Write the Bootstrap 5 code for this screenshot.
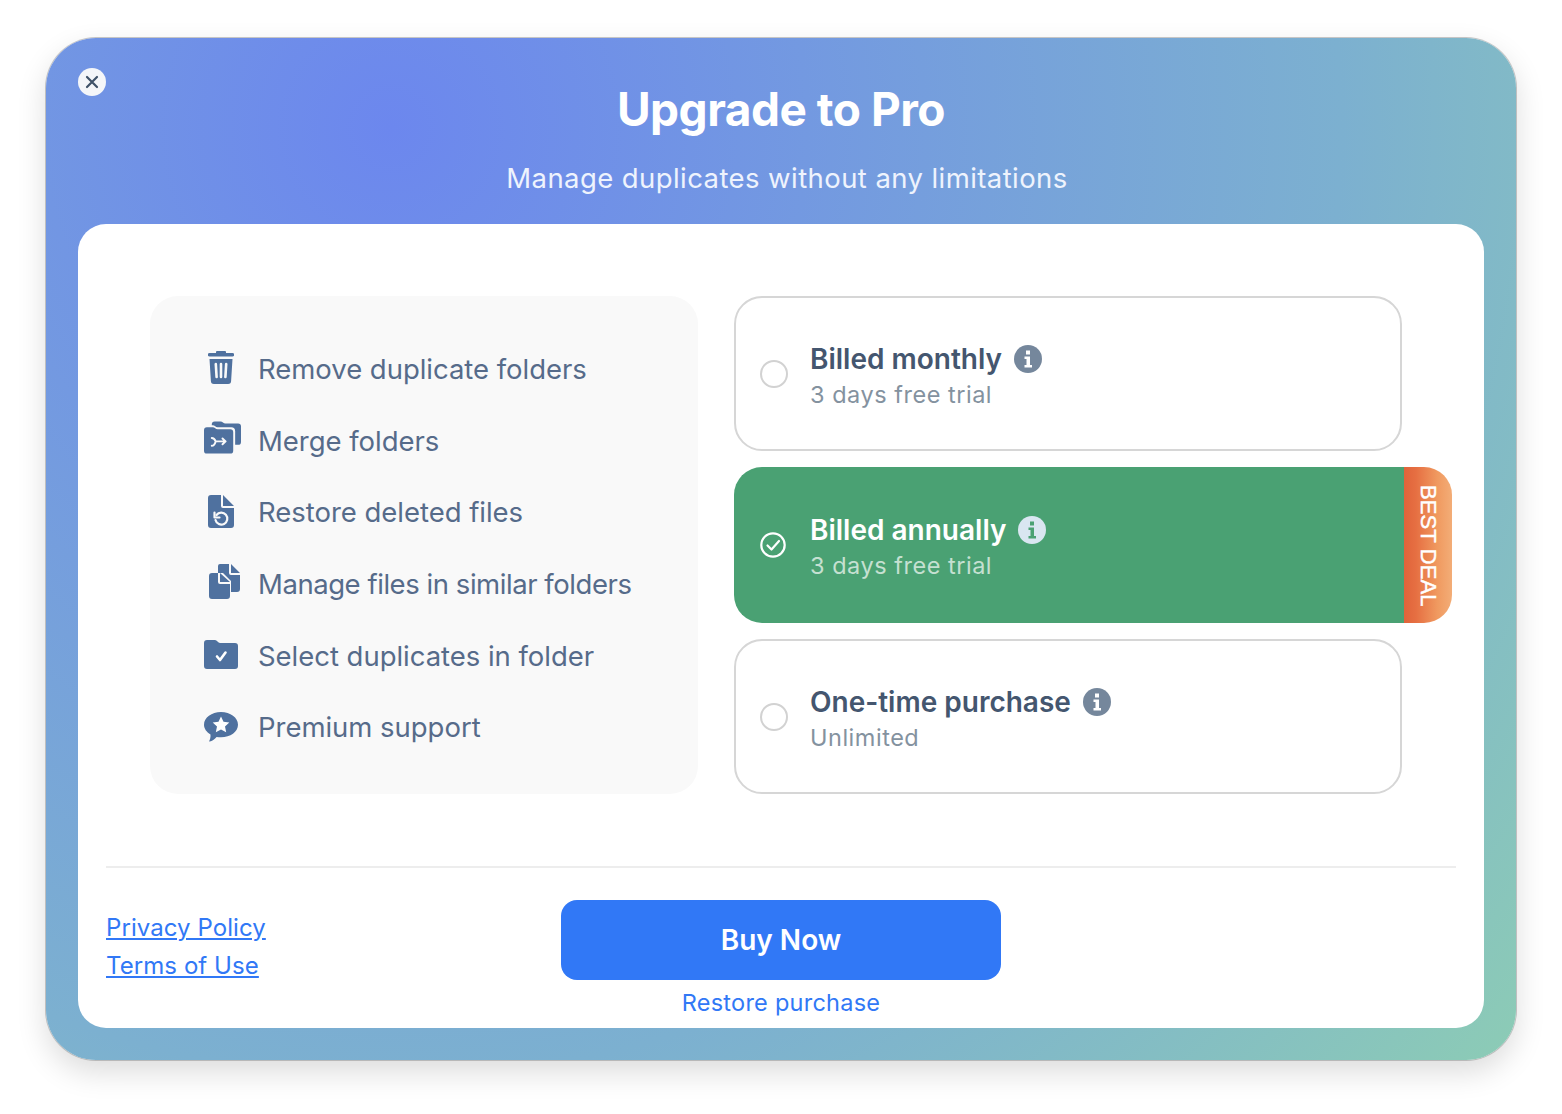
<!DOCTYPE html>
<html lang="en">
<head>
  <meta charset="UTF-8" />
  <meta name="viewport" content="width=device-width, initial-scale=1.0" />
  <title>Upgrade to Pro</title>
  <link href="https://cdn.jsdelivr.net/npm/bootstrap@5.3.3/dist/css/bootstrap.min.css" rel="stylesheet" />
  <style>
    body {
      background: #fff;
      font-family: 'Inter', sans-serif;
      padding: 38px 46px 54px;
    }
    .pro-window {
      height: 1022px;
      padding: 0 32px 32px;
      border-radius: 50px;
      background: radial-gradient(circle at 345px 90px, #6c87ee 0, #7cb0d0 950px, #8ccbb6 1450px);
      box-shadow: 0 0 0 1px rgba(120, 120, 120, .4), 0 12px 30px rgba(0, 0, 0, .14);
    }
    .close-btn {
      top: 30px;
      left: 32px;
      width: 28px;
      height: 28px;
      background: #f4f6f9;
    }
    .pro-head { height: 186px; color: #fff; }
    .pro-title { font-size: 46px; font-weight: 700; letter-spacing: -.49px; line-height: 56px; padding-top: 43px; margin: 0; }
    .pro-sub { font-size: 27.5px; line-height: 34px; margin: 24px 0 0 12px; color: #eef3fd; letter-spacing: .42px; }
    .pro-panel { height: 804px; background: #fff; border-radius: 28px; padding: 72px 28px 0; }
    .plans-row { padding: 0 44px; gap: 36px; }
    .feature-box { width: 548px; height: 498px; background: #f9f9f9; border-radius: 28px; padding: 38px 0 0 53px; }
    .feature-item { height: 71.6px; gap: 19px; color: #566b8a; font-size: 27.5px; letter-spacing: -.03px; }
    .feature-ico { width: 36px; flex: none; }
    .copy-tight { letter-spacing: -.45px; }
    .ico-trash { margin-bottom: 5px; }
    .ico-merge { margin: 0 -2px 7px 1px; }
    .ico-restore { margin-bottom: 2px; }
    .ico-files { margin: 0 -3px 6px 3px; }
    .ico-folder { margin-bottom: 4px; }
    .ico-chat { margin-bottom: 2px; }
    .plan-list { width: 668px; gap: 16px; }
    .plan-item { height: 155px; border: 2px solid #d6d6d6; border-radius: 28px; padding: 4px 0 0 24px; gap: 22px; color: #44566f; }
    .plan-on { width: 670px; height: 156px; background: #4aa173; border-color: #4aa173; border-right: 0; color: #fff; border-radius: 28px 0 0 28px; }
    .plan-radio { width: 28px; height: 28px; margin-top: -4px; border: 2px solid #d2d2d2; border-radius: 50%; flex: none; }
    .plan-check { margin-top: -4px; flex: none; }
    .plan-name { font-size: 28px; font-weight: 600; line-height: 34px; gap: 12px; }
    .plan-note { font-size: 23.5px; line-height: 30px; margin-top: 4px; color: #84929f; letter-spacing: .52px; }
    .plan-on .plan-note { color: #c5e0d1; }
    .deal-tab {
      top: -2px;
      left: 100%;
      width: 48px;
      height: calc(100% + 4px);
      padding-top: 2px;
      border-radius: 0 28px 28px 0;
      background: linear-gradient(90deg, #e0633a 0%, #e66f42 25%, #f09a60 70%, #f3ad77 100%);
      writing-mode: vertical-rl;
      font-family: 'Liberation Sans', sans-serif;
      font-size: 22px;
      letter-spacing: .1px;
      -webkit-text-stroke: .4px #fff;
      color: #fff;
    }
    .pro-rule { border-top: 2px solid #ededed; margin: 72px 0 0; opacity: 1; }
    .pro-foot { height: 159px; }
    .legal-links { top: 41px; left: 0; font-size: 24px; line-height: 38px; letter-spacing: .07px; }
    .legal-links a, .restore-link { color: #3178f6; }
    .buy-btn { width: 440px; height: 80px; margin-top: 32px; background: #3178f6; border: 0; border-radius: 16px; font-size: 28px; font-weight: 600; flex: none; }
    .restore-link { font-size: 23.5px; line-height: 30px; margin-top: 8px; text-decoration: none; letter-spacing: .25px; }
  </style>
</head>
<body>
  <div class="pro-window position-relative">
    <div class="close-btn position-absolute rounded-circle d-flex align-items-center justify-content-center">
      <svg width="14" height="14" viewBox="0 0 14 14"><path d="M2 2l10 10M12 2L2 12" stroke="#3f5268" stroke-width="2.2" stroke-linecap="round"/></svg>
    </div>
    <div class="pro-head text-center">
      <h1 class="pro-title">Upgrade to Pro</h1>
      <p class="pro-sub">Manage duplicates without any limitations</p>
    </div>

    <div class="pro-panel">
      <div class="plans-row d-flex">
        <div class="feature-box">
          <div class="feature-item d-flex align-items-center">
            <span class="feature-ico d-flex justify-content-center">
              <svg class="ico-trash" width="26" height="33" viewBox="0 0 26 33"><path fill="#4f719f" d="M9 0h8a1 1 0 0 1 1 1v1h6.500a1.500 1.500 0 0 1 0 3.500h-23a1.500 1.500 0 0 1 0-3.500H8V1a1 1 0 0 1 1-1zM1.500 8h23l-1.400 22a3 3 0 0 1-3 3H5.900a3 3 0 0 1-3-3z"/><path d="M7.800 13l.8 13M13 13v13M18.200 13l-.8 13" stroke="#f9f9f9" stroke-width="2.600" stroke-linecap="round"/></svg>
            </span>
            <span>Remove duplicate folders</span>
          </div>
          <div class="feature-item d-flex align-items-center">
            <span class="feature-ico d-flex justify-content-center">
              <svg class="ico-merge" width="38" height="33" viewBox="0 0 38 33"><path fill="#4f719f" d="M8 3a3 3 0 0 1 3-3h6c2 0 3 2 5 2h13a3 3 0 0 1 3 3v16a3 3 0 0 1-3 3h-3V10a4 4 0 0 0-4-4H14c-2 0-3-2-5-2H8z"/><path fill="#4f719f" d="M3 6h6c2 0 3 2 5 2h13a3 3 0 0 1 3 3v19a3 3 0 0 1-3 3H3a3 3 0 0 1-3-3V9a3 3 0 0 1 3-3z"/><path d="M8 17c2 0 3 1 4 3.500h10M8 25c2 0 3-1 4-4.500M19 17.500l3.200 3-3.200 3" fill="none" stroke="#f9f9f9" stroke-width="2" stroke-linecap="round" stroke-linejoin="round"/></svg>
            </span>
            <span>Merge folders</span>
          </div>
          <div class="feature-item d-flex align-items-center">
            <span class="feature-ico d-flex justify-content-center">
              <svg class="ico-restore" width="26" height="33" viewBox="0 0 26 33"><path fill="#4f719f" d="M3 0h10v11a2 2 0 0 0 2 2h11v17a3 3 0 0 1-3 3H3a3 3 0 0 1-3-3V3a3 3 0 0 1 3-3zM15 0l11 11H15z"/><path d="M8.500 20a6 6 0 1 1-1 5" fill="none" stroke="#f9f9f9" stroke-width="2.200" stroke-linecap="round"/><path d="M6.500 17.500v5h5" fill="none" stroke="#f9f9f9" stroke-width="2.200" stroke-linecap="round" stroke-linejoin="round"/></svg>
            </span>
            <span>Restore deleted files</span>
          </div>
          <div class="feature-item d-flex align-items-center">
            <span class="feature-ico d-flex justify-content-center">
              <svg class="ico-files" width="31" height="35" viewBox="0 0 31 35"><path fill="#4f719f" d="M11 0h9v9a2 2 0 0 0 2 2h9v14a3 3 0 0 1-3 3h-6V17l-8-8H9V2a2 2 0 0 1 2-2zM22 0l9 9h-9z"/><path fill="#4f719f" d="M3 9h6v9a2 2 0 0 0 2 2h10v12a3 3 0 0 1-3 3H3a3 3 0 0 1-3-3V12a3 3 0 0 1 3-3zM11 9l10 9H11z"/></svg>
            </span>
            <span class="copy-tight">Manage files in similar folders</span>
          </div>
          <div class="feature-item d-flex align-items-center">
            <span class="feature-ico d-flex justify-content-center">
              <svg class="ico-folder" width="34" height="29" viewBox="0 0 34 29"><path fill="#4f719f" d="M3 0h8c2 0 3 3 5 3h15a3 3 0 0 1 3 3v20a3 3 0 0 1-3 3H3a3 3 0 0 1-3-3V3a3 3 0 0 1 3-3z"/><path d="M13 16.500l3 3.500 5.500-7.500" fill="none" stroke="#fff" stroke-width="2.600" stroke-linecap="round" stroke-linejoin="round"/></svg>
            </span>
            <span>Select duplicates in folder</span>
          </div>
          <div class="feature-item d-flex align-items-center">
            <span class="feature-ico d-flex justify-content-center">
              <svg class="ico-chat" width="34" height="30" viewBox="0 0 34 30"><path fill="#4f719f" d="M17 0c9.400 0 17 5.600 17 12.700 0 7-7.600 12.600-17 12.600-1.500 0-3-.1-4.400-.4C10.500 27.500 7.500 29.500 5 29.500c1-1.700 1.700-4 1.500-7C2.500 20 0 16.500 0 12.700 0 5.600 7.600 0 17 0z"/><path fill="#fff" d="M17 4.500l2.500 5.300 5.800.7-4.300 4 1.200 5.800-5.200-2.900-5.200 2.900 1.200-5.800-4.300-4 5.800-.7z"/></svg>
            </span>
            <span>Premium support</span>
          </div>
        </div>

        <div class="plan-list d-flex flex-column">
          <div class="plan-item d-flex align-items-center">
            <span class="plan-radio"></span>
            <div>
              <div class="plan-name d-flex align-items-center">Billed monthly
                <svg width="28" height="28" viewBox="0 0 28 28"><circle cx="14" cy="14" r="14" fill="#75879c"/><path fill="#fff" d="M12 5.500h4v4h-4zM10.500 11.500H16V20h2v2.500h-7.500V20h2v-6h-2z"/></svg>
              </div>
              <div class="plan-note">3 days free trial</div>
            </div>
          </div>
          <div class="plan-item plan-on position-relative d-flex align-items-center">
            <svg class="plan-check" width="28" height="28" viewBox="0 0 28 28"><circle cx="13" cy="14" r="11.700" fill="none" stroke="#fff" stroke-width="2.200"/><path d="M7.500 14.500l4 4 7.500-8.500" fill="none" stroke="#fff" stroke-width="2.200" stroke-linecap="round" stroke-linejoin="round"/></svg>
            <div>
              <div class="plan-name d-flex align-items-center">Billed annually
                <svg width="28" height="28" viewBox="0 0 28 28"><circle cx="14" cy="14" r="14" fill="#d9e6f1"/><path fill="#4aa173" d="M12 5.500h4v4h-4zM10.500 11.500H16V20h2v2.500h-7.500V20h2v-6h-2z"/></svg>
              </div>
              <div class="plan-note">3 days free trial</div>
            </div>
            <div class="deal-tab position-absolute d-flex align-items-center justify-content-center">BEST DEAL</div>
          </div>
          <div class="plan-item d-flex align-items-center">
            <span class="plan-radio"></span>
            <div>
              <div class="plan-name d-flex align-items-center">One-time purchase
                <svg width="28" height="28" viewBox="0 0 28 28"><circle cx="14" cy="14" r="14" fill="#75879c"/><path fill="#fff" d="M12 5.500h4v4h-4zM10.500 11.500H16V20h2v2.500h-7.500V20h2v-6h-2z"/></svg>
              </div>
              <div class="plan-note">Unlimited</div>
            </div>
          </div>
        </div>
      </div>

      <hr class="pro-rule" />

      <div class="pro-foot position-relative d-flex flex-column align-items-center">
        <div class="legal-links position-absolute d-flex flex-column align-items-start">
          <a href="#">Privacy Policy</a>
          <a href="#">Terms of Use</a>
        </div>
        <button type="button" class="btn btn-primary buy-btn">Buy Now</button>
        <a href="#" class="restore-link">Restore purchase</a>
      </div>
    </div>
  </div>
</body>
</html>
